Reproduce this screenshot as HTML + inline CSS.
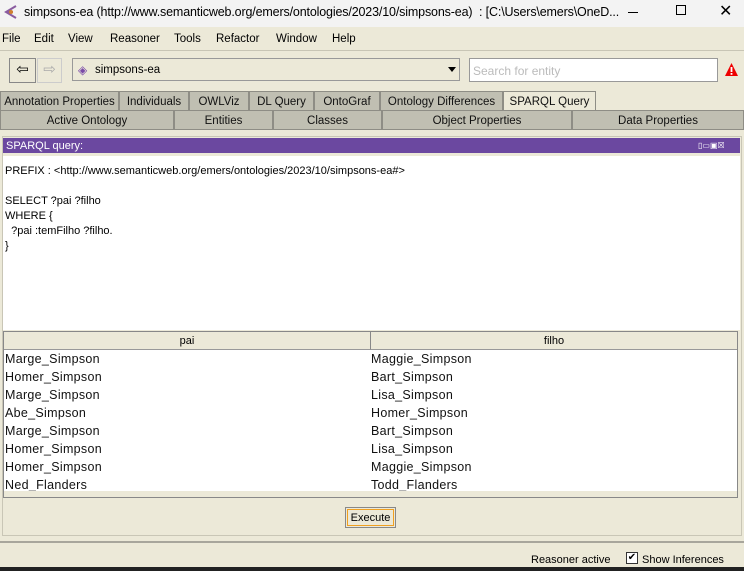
<!DOCTYPE html>
<html><head><style>
*{margin:0;padding:0;box-sizing:border-box}
body{width:744px;height:571px;position:relative;overflow:hidden;background:#ece9d8;font-family:"Liberation Sans",sans-serif;font-size:12px;color:#000}
.a{position:absolute}
.tab{position:absolute;height:19px;background:#c0bfb2;border:1px solid #8e8d85;border-bottom:none;text-align:center;line-height:20px;font-size:11.5px;color:#111}
.row{position:absolute;left:5px;font-size:12.5px;letter-spacing:.3px;color:#111}
</style></head><body>
<div class="a" style="left:0;top:0;width:744px;height:27px;background:#f3f3f3"></div>
<svg class="a" style="left:4px;top:5px" width="14" height="14"><path d="M12 1 L2 7 L12 13 M2 7 L9 7" stroke="#8a5ca0" stroke-width="2" fill="none"/><circle cx="7" cy="7" r="2" fill="#d08030"/></svg>
<div class="a" style="left:24px;top:5px;font-size:12.5px;letter-spacing:-0.15px">simpsons-ea (http://www.semanticweb.org/emers/ontologies/2023/10/simpsons-ea)&nbsp; : [C:\Users\emers\OneD...</div>
<div class="a" style="left:628px;top:12px;width:10px;height:1px;background:#000"></div>
<div class="a" style="left:676px;top:5px;width:10px;height:10px;border:1px solid #000"></div>
<div class="a" style="left:719px;top:1px;font-size:16px">✕</div>
<div class="a" style="left:2px;top:33px;font-size:11.5px">File</div>
<div class="a" style="left:34px;top:33px;font-size:11.5px">Edit</div>
<div class="a" style="left:68px;top:33px;font-size:11.5px">View</div>
<div class="a" style="left:110px;top:33px;font-size:11.5px">Reasoner</div>
<div class="a" style="left:174px;top:33px;font-size:11.5px">Tools</div>
<div class="a" style="left:216px;top:33px;font-size:11.5px">Refactor</div>
<div class="a" style="left:276px;top:33px;font-size:11.5px">Window</div>
<div class="a" style="left:332px;top:33px;font-size:11.5px">Help</div>
<div class="a" style="left:0;top:50px;width:744px;height:1px;background:#c8c5b5"></div>
<div class="a" style="left:9px;top:58px;width:27px;height:25px;border:1px solid #888;background:#ece9d8;text-align:center;line-height:22px;font-size:15px">⇦</div>
<div class="a" style="left:37px;top:58px;width:25px;height:25px;border:1px solid #ccc;text-align:center;line-height:22px;font-size:15px;color:#aaa">⇨</div>
<div class="a" style="left:72px;top:58px;width:388px;height:23px;border:1px solid #999;background:#ece9d8"></div>
<div class="a" style="left:78px;top:63px;color:#7a4aa8;font-size:12px">◈</div>
<div class="a" style="left:95px;top:64px;font-size:11.5px">simpsons-ea</div>
<div class="a" style="left:448px;top:67px;width:0;height:0;border-left:4px solid transparent;border-right:4px solid transparent;border-top:5px solid #000"></div>
<div class="a" style="left:469px;top:58px;width:249px;height:24px;border:1px solid #999;background:#fff;color:#bbb;padding:5px 3px;font-size:12px">Search for entity</div>
<svg class="a" style="left:724px;top:62px" width="15" height="15"><path d="M7.5 1 L14 14 L1 14 Z" fill="#e00"/><rect x="6.6" y="5" width="1.8" height="5" fill="#fff"/><rect x="6.6" y="11" width="1.8" height="1.8" fill="#fff"/></svg>
<div class="tab" style="left:0;top:91px;width:119px">Annotation Properties</div>
<div class="tab" style="left:119px;top:91px;width:70px">Individuals</div>
<div class="tab" style="left:189px;top:91px;width:60px">OWLViz</div>
<div class="tab" style="left:249px;top:91px;width:65px">DL Query</div>
<div class="tab" style="left:314px;top:91px;width:66px">OntoGraf</div>
<div class="tab" style="left:380px;top:91px;width:123px">Ontology Differences</div>
<div class="tab" style="left:503px;top:91px;width:93px;background:#ece9d8">SPARQL Query</div>
<div class="tab" style="left:0;top:110px;width:174px">Active Ontology</div>
<div class="tab" style="left:174px;top:110px;width:99px">Entities</div>
<div class="tab" style="left:273px;top:110px;width:109px">Classes</div>
<div class="tab" style="left:382px;top:110px;width:190px">Object Properties</div>
<div class="tab" style="left:572px;top:110px;width:172px">Data Properties</div>
<div class="a" style="left:0;top:129px;width:744px;height:1px;background:#8e8d85"></div>
<div class="a" style="left:2px;top:136px;width:740px;height:400px;border:1px solid #c9c6b6"></div>
<div class="a" style="left:3px;top:138px;width:737px;height:15px;background:#6b48a0;color:#fff;font-size:11px;line-height:16px;padding-left:3px">SPARQL query:</div>
<div class="a" style="left:698px;top:141px;width:40px;height:9px;color:#fff;font-size:8px;line-height:9px">▯▭▣☒</div>
<div class="a" style="left:3px;top:156px;width:737px;height:174px;background:#fff;font-size:11px;line-height:15px;padding:8px 2px;white-space:pre">PREFIX : &lt;http://www.semanticweb.org/emers/ontologies/2023/10/simpsons-ea#&gt;

SELECT ?pai ?filho
WHERE {
  ?pai :temFilho ?filho.
}</div>
<div class="a" style="left:3px;top:331px;width:735px;height:167px;border:1px solid #888;background:#fff"></div>
<div class="a" style="left:4px;top:332px;width:367px;height:18px;background:#ece9d8;border-right:1px solid #888;border-bottom:1px solid #999;text-align:center;font-size:11px;line-height:18px">pai</div>
<div class="a" style="left:371px;top:332px;width:366px;height:18px;background:#ece9d8;border-bottom:1px solid #999;text-align:center;font-size:11px;line-height:18px">filho</div>
<div class="a" style="left:0;top:351px;width:744px">
<div class="row" style="left:5px;top:1px">Marge_Simpson</div><div class="row" style="left:371px;top:1px">Maggie_Simpson</div>
<div class="row" style="top:19px">Homer_Simpson</div><div class="row" style="left:371px;top:19px">Bart_Simpson</div>
<div class="row" style="top:37px">Marge_Simpson</div><div class="row" style="left:371px;top:37px">Lisa_Simpson</div>
<div class="row" style="top:55px">Abe_Simpson</div><div class="row" style="left:371px;top:55px">Homer_Simpson</div>
<div class="row" style="top:73px">Marge_Simpson</div><div class="row" style="left:371px;top:73px">Bart_Simpson</div>
<div class="row" style="top:91px">Homer_Simpson</div><div class="row" style="left:371px;top:91px">Lisa_Simpson</div>
<div class="row" style="top:109px">Homer_Simpson</div><div class="row" style="left:371px;top:109px">Maggie_Simpson</div>
<div class="row" style="top:127px">Ned_Flanders</div><div class="row" style="left:371px;top:127px">Todd_Flanders</div>
</div>
<div class="a" style="left:4px;top:491px;width:733px;height:6px;background:#ece9d8"></div>
<div class="a" style="left:345px;top:507px;width:51px;height:21px;border:1px solid #888;background:#ece9d8;padding:1px"><div style="border:1px solid #f0a020;height:17px;text-align:center;font-size:11px;line-height:16px">Execute</div></div>
<div class="a" style="left:0;top:541px;width:744px;height:2px;background:#a8a69c"></div>
<div class="a" style="left:531px;top:554px;font-size:11px">Reasoner active</div>
<div class="a" style="left:626px;top:552px;width:12px;height:12px;border:1px solid #333;background:#fff;font-size:10px;line-height:10px;text-align:center">✔</div>
<div class="a" style="left:642px;top:554px;font-size:11px">Show Inferences</div>
<div class="a" style="left:0;top:567px;width:744px;height:4px;background:#222"></div>
</body></html>
